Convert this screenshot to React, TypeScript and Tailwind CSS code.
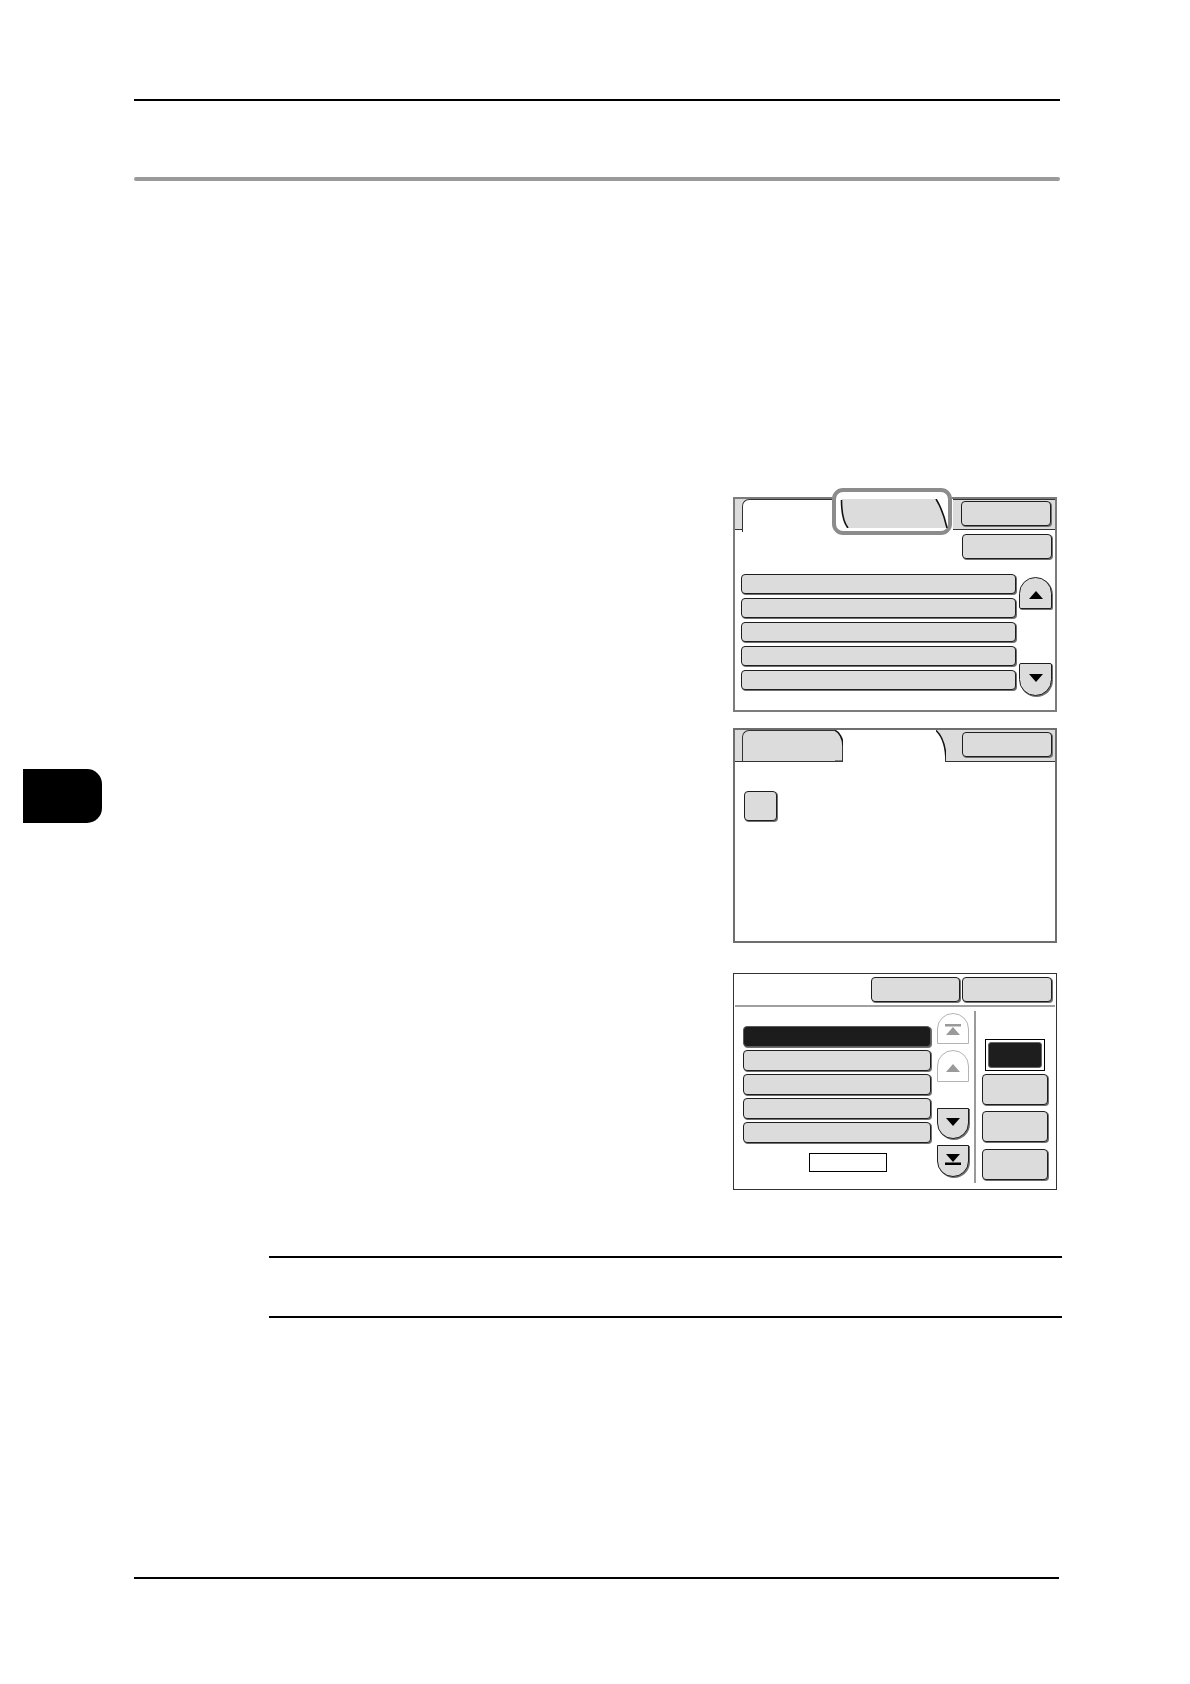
import React from "react";

const btn =
  "bg-[#dcdcdc] border border-[#1e1e1e] rounded-[4px] shadow-[1px_1px_0_0_#707070]";

function TriUp({ color = "#000" }: { color?: string }) {
  return (
    <svg width="14" height="8" viewBox="0 0 14 8">
      <polygon points="0,8 7,0 14,8" fill={color} />
    </svg>
  );
}

function TriDown({ color = "#000" }: { color?: string }) {
  return (
    <svg width="14" height="8" viewBox="0 0 14 8">
      <polygon points="0,0 14,0 7,8" fill={color} />
    </svg>
  );
}

function TopIcon({ color }: { color: string }) {
  return (
    <svg width="16" height="11" viewBox="0 0 16 11">
      <rect x="0" y="0" width="16" height="2.5" fill={color} />
      <polygon points="1,11 8,3 15,11" fill={color} />
    </svg>
  );
}

function BottomIcon({ color }: { color: string }) {
  return (
    <svg width="16" height="11" viewBox="0 0 16 11">
      <polygon points="1,0 15,0 8,8" fill={color} />
      <rect x="0" y="8.5" width="16" height="2.5" fill={color} />
    </svg>
  );
}

function Row({ dark = false }: { dark?: boolean }) {
  return dark ? (
    <div className="h-full w-full bg-[#1c1c1c] border border-[#5a5a5a] rounded-[4px] shadow-[1px_1px_0_0_#707070]" />
  ) : (
    <div className={`h-full w-full ${btn}`} />
  );
}

function Panel1() {
  return (
    <div className="relative h-[215px] w-[324px] border-2 border-[#7c7c7c] bg-white flex flex-col">
      {/* header */}
      <div className="flex h-[31px]">
        <div className="flex w-[97px] bg-[#dcdcdc]">
          <div className="w-[7px] h-full border-b border-[#333]" />
          <div className="w-[90px] h-[33px] bg-white border-l-[1.5px] border-t border-[#333] rounded-tl-[7px]" />
        </div>
        <div className="relative w-[121px]">
          <div className="absolute left-0 top-[-11px] w-[120px] h-[47px] border-[4px] border-[#8c8c8c] rounded-[11px] bg-white" />
          <div className="relative z-10 ml-[8px]">
            <svg width="108" height="29" viewBox="0 0 108 29">
              <path
                d="M1.5,0 L96,0 C101,8 105,20 107,29 L8,29 C4,24 1.5,14 1.5,3 Z"
                fill="#dcdcdc"
              />
              <path d="M1.5,1 C1.5,14 4,24 8,29" fill="none" stroke="#111" strokeWidth="1.6" />
              <path d="M96,0 C101,8 105,20 107,29" fill="none" stroke="#111" strokeWidth="1.6" />
            </svg>
          </div>
        </div>
        <div className="flex-1 bg-[#dcdcdc] border-b border-t border-[#333] flex items-start">
          <div className={`ml-[8px] mt-[1px] w-[90px] h-[25px] ${btn}`} />
        </div>
      </div>
      {/* body */}
      <div className="self-end mr-[3px] mt-[4px] w-[90px] h-[25px]">
        <div className={`w-full h-full ${btn}`} />
      </div>
      <div className="flex mt-[15px] pl-[6px]">
        <div className="w-[275px] flex flex-col gap-[4px]">
          {[0, 1, 2, 3, 4].map((i) => (
            <div key={i} className="h-[20px]">
              <Row />
            </div>
          ))}
        </div>
        <div className="ml-[3px] w-[33px] flex flex-col">
          <div className="mt-[3px] h-[32px] bg-[#dcdcdc] border border-[#1e1e1e] rounded-t-[17px] rounded-b-[2px] shadow-[1px_1px_0_0_#707070] flex items-center justify-center pt-[3px]">
            <TriUp />
          </div>
          <div className="mt-[54px] h-[33px] bg-[#dcdcdc] border border-[#1e1e1e] rounded-b-[17px] rounded-t-[2px] shadow-[1px_1px_0_0_#707070] flex items-center justify-center pb-[3px]">
            <TriDown />
          </div>
        </div>
      </div>
    </div>
  );
}

function Panel2() {
  return (
    <div className="h-[215px] w-[324px] border-2 border-[#6e6e6e] bg-white flex flex-col mt-[16px]">
      <div className="flex h-[32px]">
        <div className="w-[100px] h-full bg-[#dcdcdc] border-b-[1.5px] border-[#333] flex">
          <div className="ml-[7px] w-[93px] h-[31px] border-l-[1.5px] border-t border-[#333] rounded-tl-[7px]" />
        </div>
        <svg width="8" height="32" viewBox="0 0 8 32" className="shrink-0">
          <path d="M0,0 C4,2 8,8 8,16 L8,32 L0,32 Z" fill="#dcdcdc" />
          <path d="M0,0.5 C4,2 8,8 8,16 L8,32" fill="none" stroke="#111" strokeWidth="1.6" />
          <line x1="0" y1="31.2" x2="8" y2="31.2" stroke="#333" strokeWidth="1.5" />
        </svg>
        <div className="w-[93px] h-full bg-white" />
        <svg width="10" height="32" viewBox="0 0 10 32" className="shrink-0">
          <path d="M0,0 L10,0 L10,32 C10,16 6,6 0,0 Z" fill="#dcdcdc" />
          <path d="M0,0.5 C6,6 10,16 10,32" fill="none" stroke="#111" strokeWidth="1.6" />
        </svg>
        <div className="flex-1 h-full bg-[#dcdcdc] border-b-[1.5px] border-[#333] flex items-start">
          <div className={`ml-[16px] mt-[2px] w-[90px] h-[25px] ${btn}`} />
        </div>
      </div>
      <div className={`ml-[9px] mt-[29px] w-[33px] h-[30px] ${btn}`} />
    </div>
  );
}

function Panel3() {
  return (
    <div className="h-[217px] w-[324px] border border-[#333] bg-white flex flex-col mt-[30px]">
      <div className="flex h-[31px] justify-end gap-[2px] pr-[4px]">
        <div className={`mt-[3px] w-[89px] h-[25px] ${btn}`} />
        <div className={`mt-[3px] w-[90px] h-[25px] ${btn}`} />
      </div>
      <div className="mx-[1px] h-[1.5px] bg-[#a0a0a0]" />
      <div className="flex flex-1">
        <div className="flex flex-col pl-[9px] pt-[19px] w-[197px]">
          <div className="w-[188px] flex flex-col gap-[3px]">
            {[0, 1, 2, 3, 4].map((i) => (
              <div key={i} className="h-[21px]">
                <Row dark={i === 0} />
              </div>
            ))}
          </div>
          <div className="ml-[66px] mt-[10px] w-[78px] h-[19px] border border-black bg-white" />
        </div>
        <div className="ml-[6px] w-[32px] flex flex-col pt-[6px]">
          <div className="h-[31px] bg-white border border-[#b4b4b4] rounded-t-[16px] flex items-center justify-center pt-[2px]">
            <TopIcon color="#9a9a9a" />
          </div>
          <div className="mt-[6px] h-[32px] bg-white border border-[#b4b4b4] rounded-t-[16px] flex items-center justify-center pt-[4px]">
            <TriUp color="#9a9a9a" />
          </div>
          <div className="mt-[26px] h-[31px] bg-[#dcdcdc] border border-[#1e1e1e] rounded-b-[16px] shadow-[1px_1px_0_0_#707070] flex items-center justify-center pb-[3px]">
            <TriDown />
          </div>
          <div className="mt-[6px] h-[32px] bg-[#dcdcdc] border border-[#1e1e1e] rounded-b-[16px] shadow-[1px_1px_0_0_#707070] flex items-center justify-center pb-[3px]">
            <BottomIcon color="#000" />
          </div>
        </div>
        <div className="ml-[5px] mt-[4px] mb-[6px] w-[1.5px] bg-[#9a9a9a]" />
        <div className="flex flex-col pl-[6px] pt-[32px]">
          <div className="ml-[3px] w-[60px] h-[32px] border border-black p-[2px]">
            <div className="w-full h-full bg-[#1e1e1e] border border-[#666] rounded-[3px]" />
          </div>
          <div className={`mt-[3px] w-[66px] h-[31px] ${btn}`} />
          <div className={`mt-[6px] w-[66px] h-[31px] ${btn}`} />
          <div className={`mt-[7px] w-[66px] h-[31px] ${btn}`} />
        </div>
      </div>
    </div>
  );
}

export default function App() {
  return (
    <div className="w-[1190px] h-[1684px] bg-white flex flex-col">
      <div className="ml-[134px] mt-[99px] w-[926px] h-[2px] bg-black" />
      <div className="ml-[134px] mt-[76px] w-[926px] h-[4px] bg-[#9a9a9a] rounded-full" />
      <div className="flex mt-[316px]">
        <div className="w-[733px] pl-[23px] pt-[272px]">
          <div className="w-[79px] h-[54px] bg-black rounded-r-[15px]" />
        </div>
        <div className="w-[324px] flex flex-col">
          <Panel1 />
          <Panel2 />
          <Panel3 />
        </div>
      </div>
      <div className="ml-[269px] mt-[66px] w-[793px] h-[2px] bg-black" />
      <div className="ml-[269px] mt-[58px] w-[793px] h-[2px] bg-black" />
      <div className="ml-[134px] mt-[259px] w-[925px] h-[2px] bg-black" />
    </div>
  );
}
